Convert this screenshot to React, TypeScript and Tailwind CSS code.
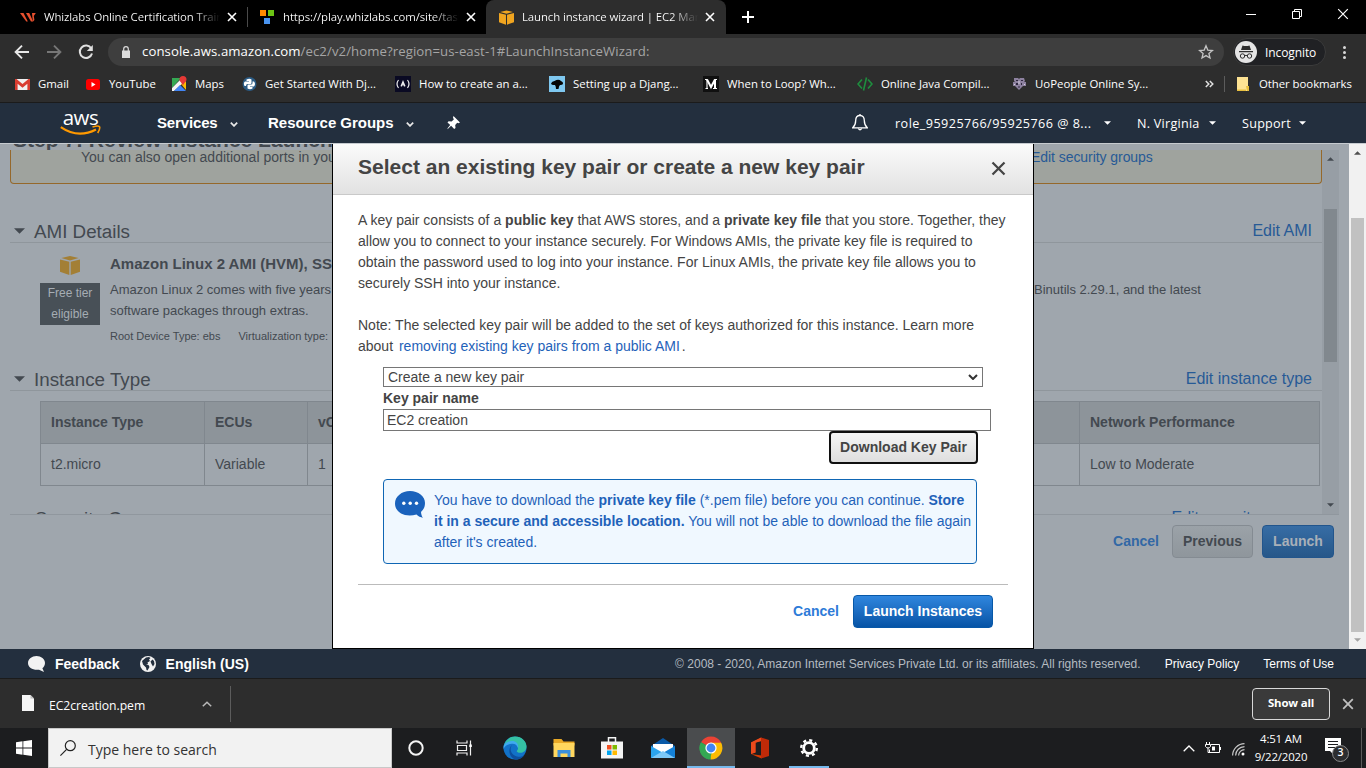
import type { ReactNode } from "react";

const SEGOE = "font-['Open_Sans','Noto_Sans',sans-serif]";

/* ---------- shared glyphs ---------- */

function CloseX({ className }: { className: string }) {
  return (
    <svg viewBox="0 0 10 10" className={className} fill="none" stroke="currentColor">
      <path d="M1 1l8 8M9 1L1 9" />
    </svg>
  );
}

function Cube({ className, fill }: { className: string; fill: string }) {
  return (
    <svg viewBox="0 0 20 19" className={className} fill={fill}>
      <path d="M10 0l8.6 2.1L10 4.4 1.4 2.1z" />
      <path d="M0 3.4l9.3 2.4V19L0 15.8z" />
      <path d="M20 3.4l-9.3 2.4V19L20 15.8z" />
    </svg>
  );
}

function Triangle({ className, up }: { className: string; up?: boolean }) {
  return (
    <svg viewBox="0 0 8 4" className={className} fill="currentColor">
      <path d={up ? "M0 4L4 0l4 4z" : "M0 0h8L4 4z"} />
    </svg>
  );
}

/* ---------- browser chrome ---------- */

function TabTitle({ children }: { children: ReactNode }) {
  return (
    <span className="block w-[176px] shrink-0 overflow-hidden whitespace-nowrap bg-linear-to-r from-white from-85% to-transparent bg-clip-text text-[11.4px] tracking-[-0.1px] text-transparent">
      {children}
    </span>
  );
}

function TabStrip() {
  return (
    <div className="flex h-[34px] items-start bg-black text-white">
      <div className="flex h-[34px] w-[247px] items-center pl-5">
        <svg viewBox="0 0 16 9" className="mr-2 h-[9px] w-4" fill="#e8502e">
          <path d="M0 0h3.500l4.300 8.500H6.300z" />
          <path d="M6 0h3.200l4 8.500H11z" />
          <path d="M12 0h3.800l-2 3 .6 4-1.400 1.500-.6-4z" />
        </svg>
        <TabTitle>Whizlabs Online Certification Training</TabTitle>
        <CloseX className="ml-[7px] size-[10px] stroke-[1.6]" />
      </div>
      <div className="mt-[7px] h-5 w-px bg-[#4a4a4a]" />
      <div className="flex h-[34px] w-[238px] items-center pl-3">
        <svg viewBox="0 0 14 14" className="mr-[9px] size-[14px]">
          <path fill="#ff8a00" d="M0 0h6v6H0z" />
          <path fill="#6cc414" d="M8 0h6v6H8z" />
          <path fill="#4a94f0" d="M4 8h6v6H4z" />
        </svg>
        <TabTitle>https://play.whizlabs.com/site/task</TabTitle>
        <CloseX className="ml-[7px] size-[10px] stroke-[1.6]" />
      </div>
      <div className="flex h-[34px] w-[240px] items-center rounded-t-lg bg-[#2d2d2d] pl-[13px]">
        <Cube className="mr-2 size-[15px]" fill="#f0a520" />
        <TabTitle>Launch instance wizard | EC2 Management</TabTitle>
        <CloseX className="ml-[7px] size-[10px] stroke-[1.6]" />
      </div>
      <svg viewBox="0 0 12 12" className="mt-[11px] ml-4 size-3" stroke="#fff" strokeWidth="2">
        <path d="M6 0v12M0 6h12" />
      </svg>
      <div className="mr-[17px] ml-auto flex h-7 items-center">
        <svg viewBox="0 0 10 10" className="size-[10px]" stroke="#fff">
          <path d="M0 5.5h10" />
        </svg>
        <svg viewBox="0 0 10 10" className="ml-9 size-[10px]" fill="none" stroke="#fff">
          <path d="M.5 2.5h7v7h-7zM2.500 2.500v-2h7v7h-2" />
        </svg>
        <CloseX className="ml-[35px] size-3" />
      </div>
    </div>
  );
}

function AddressBar() {
  return (
    <div className="flex h-[35px] items-center bg-[#2d2d2d]">
      <svg viewBox="0 0 16 16" className="ml-[14px] size-4" fill="none" stroke="#e8e8e8" strokeWidth="1.9">
        <path d="M15 8H2M8 1.600L1.600 8 8 14.400" />
      </svg>
      <svg viewBox="0 0 16 16" className="ml-4 size-4" fill="none" stroke="#777" strokeWidth="1.9">
        <path d="M1 8h13M8 1.600L14.400 8 8 14.400" />
      </svg>
      <svg viewBox="0 0 16 16" className="ml-4 size-4" fill="none" stroke="#e0e0e0" strokeWidth="2">
        <path d="M13.300 4.500A6.200 6.200 0 1 0 14 9.500" />
        <path d="M14.800 1v6h-6z" fill="#e0e0e0" stroke="none" />
      </svg>
      <div className="ml-[14px] flex h-7 w-[1116px] items-center rounded-full bg-[#3e3e3e] pr-[10px] pl-[14px]">
        <svg viewBox="0 0 8 12" className="mr-3 h-3 w-2" fill="#dcdcdc">
          <path d="M0 4.500h8V12H0z" />
          <path d="M1.700 5V3a2.300 2.300 0 0 1 4.600 0v2" fill="none" stroke="#dcdcdc" strokeWidth="1.200" />
        </svg>
        <span className="pt-px text-[13.2px] tracking-[0.07px] whitespace-nowrap text-[#a5a5a5]">
          <span className="text-white">console.aws.amazon.com</span>/ec2/v2/home?region=us-east-1#LaunchInstanceWizard:
        </span>
        <svg viewBox="0 0 16 16" className="ml-auto size-4" fill="none" stroke="#c4c4c4" strokeWidth="1.300">
          <path d="M8 1.800l1.800 4.300 4.600.4-3.500 3 1.100 4.500L8 11.600 4 14l1.100-4.500-3.500-3 4.600-.4z" />
        </svg>
      </div>
      <div className="ml-[9px] flex h-7 w-[93px] items-center rounded-full border border-[#3b3b3b] bg-[#202124] pl-px">
        <svg viewBox="0 0 22 22" className="size-[22px]">
          <circle cx="11" cy="11" r="11" fill="#e4e4e4" />
          <path fill="#2d2d2d" d="M7.500 4.500q3.500 1 7 0L16 9H6zM4 10h14v1.200H4z" />
          <g fill="none" stroke="#2d2d2d">
            <circle cx="7.500" cy="15" r="2.200" />
            <circle cx="14.500" cy="15" r="2.200" />
            <path d="M9.700 14.700q1.300-.8 2.600 0" />
          </g>
        </svg>
        <span className="ml-2 pt-0.5 text-[12px] tracking-[-0.1px] text-white">Incognito</span>
      </div>
      <svg viewBox="0 0 3 13" className="mt-0.5 ml-[17px] h-[13px] w-[3px]" fill="#d8d8d8">
        <circle cx="1.500" cy="1.500" r="1.500" />
        <circle cx="1.500" cy="6.500" r="1.500" />
        <circle cx="1.500" cy="11.500" r="1.500" />
      </svg>
    </div>
  );
}

function Bookmark({ icon, label, className }: { icon: ReactNode; label: string; className: string }) {
  return (
    <div className={`flex shrink-0 items-center ${className}`}>
      <svg viewBox="0 0 16 16" className="size-4 shrink-0">
        {icon}
      </svg>
      <span className="whitespace-nowrap">{label}</span>
    </div>
  );
}

function BookmarksBar() {
  return (
    <div className="flex h-[34px] items-center border-b border-[#1b1b1b] bg-[#2d2d2d] pb-[3px] pl-[15px] text-[11.4px] text-white">
      <Bookmark
        className="w-[71px] gap-[7px]"
        label="Gmail"
        icon={
          <>
            <path fill="#f1f1f1" d="M1 3h13v11H1z" />
            <path fill="#d93d31" d="M0 3h1.500l6 5 6-5H15v11h-2.600V7.800l-4.900 4-4.900-4V14H0z" />
          </>
        }
      />
      <Bookmark
        className="w-[86px] gap-[7px]"
        label="YouTube"
        icon={
          <>
            <rect y="3" width="14" height="11" rx="2.500" fill="#f00" />
            <path fill="#fff" d="M5.500 6l4 2.500-4 2.500z" />
          </>
        }
      />
      <Bookmark
        className="w-[70px] gap-[7px]"
        label="Maps"
        icon={
          <>
            <path fill="#34a853" d="M0 2h9L0 12z" />
            <path fill="#f4f4f4" d="M0 12L9 3l3 3-10 9H0z" />
            <path fill="#4285f4" d="M2 15l6-6 6 6z" />
            <path fill="#fbbc04" d="M9 8l5-3v9z" />
            <path fill="#e53935" d="M11 0a3.500 3.500 0 0 1 3.500 3.500C14.500 6 11.500 7 11 10c-.5-3-3.500-4-3.500-6.500A3.500 3.500 0 0 1 11 0z" />
          </>
        }
      />
      <Bookmark
        className="w-[153px] gap-[7px]"
        label="Get Started With Dj..."
        icon={
          <>
            <circle cx="7.500" cy="8" r="7" fill="#2b5b84" />
            <path fill="#fff" d="M4.500 3.500q3-1.500 5 0V7q0 1-1 1H5.500Q4 8 4 10H2.500Q1 7 3 5.500h4V5H4.500zM10.500 5.500H12q2 2.500 0 5H8v.5h2.500v1.500q-2.500 1.500-5 0V9.500q0-1 1-1H9q1.500 0 1.500-1.500z" />
          </>
        }
      />
      <Bookmark
        className="w-[154px] gap-2"
        label="How to create an a..."
        icon={
          <>
            <path fill="#0a0a23" d="M0 0h16v16H0z" />
            <path fill="none" stroke="#eee" strokeWidth="1.200" d="M3.500 4Q.5 8 3.500 12M12.500 4q3 4 0 8" />
            <path fill="#eee" d="M8 4l2.500 6q-1.300 1.200-1.800 0L8 8.500l-.7 1.500q-.8 1.200-1.800 0z" />
          </>
        }
      />
      <Bookmark
        className="w-[154px] gap-2"
        label="Setting up a Djang..."
        icon={
          <>
            <path fill="#7fc8f0" d="M0 0h16v16H0z" />
            <path fill="#050505" d="M2 7.500q1-2.500 3.500-2.500 4-2.500 6.500 0 2.500 1 2 3-1 1.200-3 1-1 .5-1.500 4h-2.500q0-2.500-1-4Q2.500 9.500 2 7.500z" />
          </>
        }
      />
      <Bookmark
        className="w-[154px] gap-2"
        label="When to Loop? Wh..."
        icon={
          <>
            <path fill="#101010" d="M0 0h16v16H0z" />
            <path fill="none" stroke="#fff" strokeWidth="1.100" d="M2 3.500h2.500M11.500 3.500H14M2.500 12.500h2.500M10 12.500h4M4 3.500v9" />
            <path fill="none" stroke="#fff" strokeWidth="2" d="M4 3.500l4 7.500 4-7.500v9" />
          </>
        }
      />
      <Bookmark
        className="w-[154px] gap-2"
        label="Online Java Compil..."
        icon={<path fill="none" stroke="#1e8e3e" strokeWidth="1.600" d="M5 3.500L1 8l4 4.500M11 3.500L15 8l-4 4.500M9.500 1.500l-3 13" />}
      />
      <Bookmark
        className="w-[194px] gap-2"
        label="UoPeople Online Sy..."
        icon={
          <>
            <path fill="#8d819f" d="M3 2h4l1 1 1-1h4l1 3-1 1h2v4h-3l-2 2-2 2-2-2-2-2H2V6h2L3 5z" />
            <path fill="#2f2840" d="M5 4h2v1H5zM10 4h2v1h-2zM5 7h2v2H5zM10 7h1v2h-1zM7.500 10h1v2h-1z" />
            <path fill="#d8d2e0" d="M7.500 5h1v3h-1zM3 8h1v1H3zM13 8h1v1h-1z" />
          </>
        }
      />
      <svg viewBox="0 0 9 8" className="h-2 w-[9px]" fill="none" stroke="#e0e0e0" strokeWidth="1.500">
        <path d="M.8 1l3 3-3 3M4.800 1l3 3-3 3" />
      </svg>
      <div className="ml-[10px] h-4 w-px bg-[#5c5c5c]" />
      <Bookmark
        className="ml-[11px] gap-[7px] tracking-[-0.05px]"
        label="Other bookmarks"
        icon={
          <>
            <path fill="#fde293" d="M1 1h11v14H1z" />
            <path fill="#e8bf3f" d="M1 13.500h9V15H1zM10 10h3v5h-2z" />
          </>
        }
      />
    </div>
  );
}

/* ---------- AWS header / footer ---------- */

function Chevron({ className }: { className: string }) {
  return (
    <svg viewBox="0 0 8 5" className={`h-[5px] w-2 ${className}`} fill="none" stroke="#e8e8e8" strokeWidth="1.700">
      <path d="M.8.7L4 3.900 7.200.7" />
    </svg>
  );
}

function AwsNav() {
  return (
    <div className="flex h-10 items-center bg-[#232f3e] text-white">
      <div className="ml-[60px] flex h-10 w-[41px] flex-col items-center pt-[5px]">
        <span className="font-['Open_Sans',sans-serif] text-[20.5px] leading-[18px] font-medium tracking-[-0.5px]">aws</span>
        <svg viewBox="0 0 41 11" className="-mt-px h-[11px] w-[41px]" fill="none" stroke="#f90">
          <path d="M.8 2.200Q18 14 36 4.500" strokeWidth="2.200" />
          <path d="M32.500 2q6-1.600 7-.3 1 1.600-1.800 6.300" strokeWidth="1.600" />
        </svg>
      </div>
      <div className="ml-14 flex items-center font-['Liberation_Sans',sans-serif] text-[15px] font-bold">
        <span className="w-[73px] tracking-[-0.15px]">Services</span>
        <Chevron className="mt-[3px]" />
        <span className="ml-[30px] w-[138px] tracking-[-0.02px] whitespace-nowrap">Resource Groups</span>
        <Chevron className="mt-[3px]" />
      </div>
      <svg viewBox="0 0 14 14" className="ml-[33px] size-[14px]" fill="#fff">
        <path d="M6.500 0L13 6.500l-1.500.8-1.300-.6-2 2.200.3 3-1.300 1.100-3.100-3.200-3.600 3.400.1-1 2.600-3.300L.5 6.500l1.100-1.300 3 .3 2.200-2L6 1.500z" />
      </svg>
      <div className={`ml-auto flex items-center text-[12.6px] tracking-[0.25px] ${SEGOE}`}>
        <svg viewBox="0 0 16 17" className="mr-[27px] h-[17px] w-4" fill="none" stroke="#fff" strokeWidth="1.300">
          <path d="M8 1.500c-3 0-4.300 2-4.300 5 0 4-1 5.500-3 7.300h14.600c-2-1.800-3-3.300-3-7.300 0-3-1.300-5-4.300-5z" />
          <path d="M8 0v1.500M6.300 14.500Q8 17 9.700 14.500" />
        </svg>
        <span className="w-[209px] pt-0.5 tracking-[0.46px] whitespace-nowrap">role_95925766/95925766 @ 8...</span>
        <Triangle className="h-1 w-[7px]" />
        <span className="ml-[26px] w-[72px] pt-0.5 whitespace-nowrap">N. Virginia</span>
        <Triangle className="h-1 w-[7px]" />
        <span className="ml-[26px] w-[57px] pt-0.5">Support</span>
        <Triangle className="mr-[60px] h-1 w-[7px]" />
      </div>
    </div>
  );
}

function AwsFooter() {
  return (
    <div className="flex h-[30px] items-center border-b border-[#1b1b1b] bg-[#232f3e] pl-7 text-white">
      <svg viewBox="0 0 17 16" className="h-4 w-[17px]" fill="#f2f2f2">
        <path d="M8.500 0C13 0 17 3 17 7c0 2.300-1.100 4-2.600 5.200L16 16l-5-2.300C5 14.500 0 11.500 0 7c0-4 4-7 8.500-7z" />
      </svg>
      <span className="ml-[10px] pt-0.5 text-[14px] font-bold">Feedback</span>
      <svg viewBox="0 0 16 16" className="ml-5 size-4">
        <circle cx="8" cy="8" r="8" fill="#f2f2f2" />
        <path fill="#232f3e" d="M6 1.500l3-.5 1.500 1L9 3.500l1 1.500-2.500 1.500L8 8l-2 .5L8.500 9l1 2-2 3.500-1-.5-.5-2.500-3-3L2 5zM10.500 5.500l2-2 1.500 1.500.5 3-1.500 2.500-1.500-2.500z" />
      </svg>
      <span className="ml-[10px] pt-0.5 text-[14px] font-bold">English (US)</span>
      <div className="mr-8 ml-auto flex items-center text-[12px]">
        <span className="text-[#b5bbc1]">© 2008 - 2020, Amazon Internet Services Private Ltd. or its affiliates. All rights reserved.</span>
        <span className="ml-6">Privacy Policy</span>
        <span className="ml-6">Terms of Use</span>
      </div>
    </div>
  );
}

/* ---------- wizard page behind the dialog ---------- */

function SectionHead({ title, link, className }: { title: string; link: string; className: string }) {
  return (
    <div className={`flex items-end border-b border-[#8f969c] ${className}`}>
      <Triangle className="mb-[8px] ml-1 h-[6px] w-[11px]" />
      <span className="ml-[9px] text-[18.8px] leading-[21px]">{title}</span>
      <span className="mr-[10px] ml-auto text-[16px] leading-[22px] text-[#275a96]">{link}</span>
    </div>
  );
}

function WizardPage() {
  return (
    <div className="flex h-[505px] w-[1349px] flex-col overflow-hidden bg-[#9fa6ad] text-[#434950]">
      <div className="flex h-[6px] items-end overflow-hidden pl-[13px] text-[21px] leading-[22px] font-bold whitespace-nowrap">
        <span className="mb-[-1px] block">Step 7: Review Instance Launch</span>
      </div>
      <div className="ml-[10px] flex h-[365px] w-[1329px] border-b border-[#90979e]">
        <div className="h-[364px] w-[1312px] overflow-hidden">
          <div className="flex h-[34px] rounded-b-[4px] border border-t-0 border-[#95682b] bg-[#9fa39e] pl-[70px] text-[14px] leading-[15px]">
            <span className="w-[950px] whitespace-nowrap">You can also open additional ports in your</span>
            <span className="tracking-[-0.06px] text-[#275a96]">Edit security groups</span>
          </div>
          <SectionHead title="AMI Details" link="Edit AMI" className="mt-[27px] h-8" />
          <div className="flex h-[105px] pl-[30px]">
            <div className="flex w-[60px] flex-col items-center pt-[13px]">
              <Cube className="h-[19px] w-5" fill="#a37f35" />
              <div className="mt-2 h-[42px] w-[60px] bg-[#485057] text-center text-[12px] leading-[21px] text-[#a6adb4]">
                Free tier
                <br />
                eligible
              </div>
            </div>
            <div className="ml-[10px] whitespace-nowrap">
              <div className="pt-[9px] text-[15px] leading-[23px] font-bold">Amazon Linux 2 AMI (HVM), SSD</div>
              <div className="mt-1 flex text-[13px] leading-[21px]">
                <span className="w-[924px]">Amazon Linux 2 comes with five years</span>
                <span>Binutils 2.29.1, and the latest</span>
              </div>
              <div className="text-[13px] leading-[21px]">software packages through extras.</div>
              <div className="mt-[5px] flex gap-[18px] text-[11px] leading-[21px]">
                <span>Root Device Type: ebs</span>
                <span>Virtualization type:</span>
              </div>
            </div>
          </div>
          <SectionHead title="Instance Type" link="Edit instance type" className="mt-[11px] h-8" />
          <table className="mt-[10px] ml-[30px] w-[1280px] table-fixed border-collapse text-left text-[14px]">
            <thead>
              <tr className="h-[42px] bg-[#8d949a]">
                <th className="w-[164px] border border-[#80878e] pl-[10px]">Instance Type</th>
                <th className="w-[103px] border border-[#80878e] pl-[10px]">ECUs</th>
                <th className="w-[772px] border border-[#80878e] pl-[10px]">vCPUs</th>
                <th className="border border-[#80878e] pl-[10px]">Network Performance</th>
              </tr>
            </thead>
            <tbody>
              <tr className="h-[42px]">
                <td className="border border-[#80878e] pl-[10px]">t2.micro</td>
                <td className="border border-[#80878e] pl-[10px]">Variable</td>
                <td className="border border-[#80878e] pl-[10px]">1</td>
                <td className="border border-[#80878e] pl-[10px]">Low to Moderate</td>
              </tr>
            </tbody>
          </table>
          <div className="mt-[22px] flex pl-[25px]">
            <span className="text-[18.8px] leading-[22px]">Security Groups</span>
            <span className="mr-[10px] ml-auto text-[16px] leading-[20px] text-[#275a96]">Edit security groups</span>
          </div>
        </div>
        <div className="flex w-[17px] flex-col items-center bg-[#979ea5]">
          <Triangle up className="mt-[7px] h-1 w-[7px]" />
          <div className="mt-12 h-[153px] w-[13px] bg-[#81888e]" />
          <Triangle className="mt-auto mb-[7px] h-1 w-[7px]" />
        </div>
      </div>
      <div className="mt-[10px] mr-[15px] flex items-center justify-end text-[14px] font-bold">
        <span className="mr-[13px] text-[#3268a5]">Cancel</span>
        <span className="flex h-[33px] w-[81px] items-center justify-center rounded-[4px] border border-[#848b92] bg-linear-to-b from-[#9ba2a8] to-[#8f969c]">
          Previous
        </span>
        <span className="ml-[9px] flex h-[33px] w-[72px] items-center justify-center rounded-[4px] border border-[#22558c] bg-linear-to-b from-[#376da5] to-[#265789] text-[#a9b0b8]">
          Launch
        </span>
      </div>
    </div>
  );
}

/* ---------- key pair dialog ---------- */

function KeyPairDialog() {
  return (
    <div className="absolute top-0 left-[332px] flex h-[505px] w-[702px] flex-col border border-t-0 border-black bg-white text-[14px] leading-[21px] whitespace-nowrap text-[#444]">
      <div className="flex h-[51px] shrink-0 items-start justify-between border-b border-[#c9c9c9] bg-linear-to-b from-[#fbfbfb] to-[#e2e2e2] pt-[10px] pr-7 pl-[25px]">
        <h2 className="text-[21px] leading-[26px] font-bold">
          Select an existing key pair or create a new key pair
        </h2>
        <CloseX className="mt-[7px] -mr-px size-[15px] stroke-[1.500]" />
      </div>
      <div className="px-[25px] pt-[15px]">
        <p>
          A key pair consists of a <b>public key</b> that AWS stores, and a <b>private key file</b> that you store. Together, they
          <br />
          allow you to connect to your instance securely. For Windows AMIs, the private key file is required to
          <br />
          obtain the password used to log into your instance. For Linux AMIs, the private key file allows you to
          <br />
          securely SSH into your instance.
        </p>
        <p className="mt-[21px]">
          Note: The selected key pair will be added to the set of keys authorized for this instance. Learn more
          <br />
          about <span className="ml-0.5 text-[#1f62b9]">removing existing key pairs from a public AMI</span>
          <span className="ml-0.5">.</span>
        </p>
      </div>
      <div className="mt-[10px] ml-[50px] flex w-[608px] flex-col">
        <div className="flex h-5 w-[600px] items-center justify-between border border-[#767676] pr-1 pl-1">
          <span>Create a new key pair</span>
          <svg viewBox="0 0 10 6" className="h-[6px] w-[10px]" fill="none" stroke="#333" strokeWidth="2">
            <path d="M1 1l4 4 4-4" />
          </svg>
        </div>
        <b className="h-[22px] leading-[22px]">Key pair name</b>
        <div className="flex h-[22px] items-center border border-[#767676] pl-[3px]">EC2 creation</div>
        <div className="mr-[13px] flex h-[33px] w-[149px] items-center justify-center self-end rounded-[4px] border-2 border-[#101010] bg-linear-to-b from-[#f6f6f6] to-[#dedede] font-bold">
          Download Key Pair
        </div>
      </div>
      <div className="mt-[15px] ml-[50px] flex h-[85px] w-[594px] rounded-[4px] border border-[#0f66b4] bg-[#f0f8ff] pt-[10px] pl-[11px] text-[#1f62b9]">
        <svg viewBox="0 0 30 27" className="mt-px mr-[9px] h-[27px] w-[30px] shrink-0">
          <path fill="#1a62bc" d="M15 0c8.300 0 15 5.300 15 12 0 4-1.500 6.800-4 8.900.2 2.400.8 4.300 2 5.900-2.600-.4-4.600-1.400-6.500-3.200C9 26.800 0 21 0 12.500 0 5.500 6.700 0 15 0z" />
          <g fill="#fff">
            <circle cx="8.800" cy="12.300" r="1.700" />
            <circle cx="15.200" cy="12.300" r="1.700" />
            <circle cx="21.500" cy="12.300" r="1.700" />
          </g>
        </svg>
        <p>
          You have to download the <b>private key file</b> (*.pem file) before you can continue. <b>Store</b>
          <br />
          <b>it in a secure and accessible location.</b> You will not be able to download the file again
          <br />
          after it's created.
        </p>
      </div>
      <div className="mx-[25px] mt-5 flex items-center justify-end border-t border-[#bbb] pt-[10px] pr-[15px] font-bold">
        <span className="mr-[14px] text-[#2d7bd8]">Cancel</span>
        <span className="flex h-[33px] w-[140px] items-center justify-center rounded-[4px] border border-[#0758a8] bg-linear-to-b from-[#2f86de] to-[#0654a6] text-white">
          Launch Instances
        </span>
      </div>
    </div>
  );
}

/* ---------- download shelf and taskbar ---------- */

function DownloadShelf() {
  return (
    <div className={`flex h-[49px] items-center bg-[#2d2d2d] text-white ${SEGOE}`}>
      <svg viewBox="0 0 12 16" className="mb-px ml-[22px] h-4 w-3">
        <path fill="#f6f6f6" d="M0 0h8.500L12 3.500V16H0z" />
        <path fill="#bdbdbd" d="M8.500 0L12 3.500H8.500z" />
      </svg>
      <span className="mt-[5px] ml-[15px] w-[153px] text-[12.200px] tracking-[-0.05px]">EC2creation.pem</span>
      <svg viewBox="0 0 10 6" className="h-[6px] w-[10px]" fill="none" stroke="#b8b8b8" strokeWidth="1.500">
        <path d="M.8 5.300L5 1.200l4.200 4.100" />
      </svg>
      <div className="ml-[18px] h-9 w-px bg-[#5c5c5c]" />
      <div className="mr-[12px] ml-auto flex h-8 w-[78px] items-center justify-center rounded-[4px] border border-[#d8d8d8] bg-[#3a3a3a] pb-px text-[11.400px] font-bold tracking-[-0.15px]">
        Show all
      </div>
      <CloseX className="mr-[12px] size-3 stroke-[1.500] text-[#c0c0c0]" />
    </div>
  );
}

function AppSlot({ children, className }: { children: ReactNode; className: string }) {
  return (
    <div className={`flex h-10 shrink-0 items-center justify-center ${className}`}>
      <svg viewBox="0 0 24 24" className="size-6">
        {children}
      </svg>
    </div>
  );
}

function Taskbar() {
  return (
    <div className={`flex h-10 items-center bg-[#1c1d1f] text-white ${SEGOE}`}>
      <svg viewBox="0 0 16 16" className="ml-4 size-4" fill="#fff">
        <path d="M0 2.200l6.500-.9v6.300H0zM7.300 1.200L16 0v7.600H7.300zM0 8.400h6.500v6.300L0 13.800zM7.300 8.400H16V16l-8.700-1.200z" />
      </svg>
      <div className="ml-4 flex h-10 w-[344px] items-center border border-[#c8c8c8] bg-[#f2f2f2] text-[#333]">
        <svg viewBox="0 0 16 16" className="ml-[11px] size-4" fill="none" stroke="#222" strokeWidth="1.200">
          <circle cx="10.300" cy="5.700" r="5" />
          <path d="M6.600 9.400L.4 15.600" />
        </svg>
        <span className="ml-3 pt-0.5 text-[14px]">Type here to search</span>
      </div>
      <AppSlot className="w-12">
        <circle cx="12" cy="12" r="6.700" fill="none" stroke="#f4f4f4" strokeWidth="2" />
      </AppSlot>
      <AppSlot className="w-[47px]">
        <g fill="none" stroke="#f0f0f0" strokeWidth="1.200">
          <path d="M5.500 9.500h9v5h-9zM5 4.500v2.500h10V4.500M5 19.500V17h10v2.500M18.500 4.500v15" />
        </g>
        <path fill="#fff" d="M17.300 8.500h2.500V11h-2.500z" />
      </AppSlot>
      <AppSlot className="w-[55px]">
        <circle cx="12" cy="12" r="11.500" fill="#1272c8" />
        <path fill="#35c1a4" d="M1 9C3 3 7.500.5 12 .5c7 0 11.500 5 11.500 10 0 4-3 6.300-6.300 6.300-2.500 0-4-1-3.300-2 1-1.300 1.200-2 1-3.500C14.500 8.500 12 7 9 7 5.500 7 2 8 1 9z" />
        <path fill="#3fa9ef" d="M1 9c2-3 5-4 8-4 5 0 7 4 6 7-1-3-3-4.500-6-4.300C5 8 1.500 10 .6 13 .4 11.500.5 10 1 9z" />
        <path fill="#0d4f9e" d="M9 9c-3 4-1 10 5 11.500 3 .7 5.500 0 7.500-1.500C19 22.500 15.500 24 12 23.500 6 21 4.500 13 9 9z" />
      </AppSlot>
      <AppSlot className="w-[44px]">
        <path fill="#e9a926" d="M1.500 3h8l2 2.500h11v4h-21z" />
        <path fill="#ffd75e" d="M1.500 7h21v14h-21z" />
        <path fill="#3b8fdb" d="M5.500 14h13v7h-3v-3.500h-7V21h-3z" />
      </AppSlot>
      <AppSlot className="w-[52px]">
        <path fill="none" stroke="#f4f4f4" strokeWidth="1.500" d="M8.500 6V1.800h7V6" />
        <path fill="#f4f4f4" d="M1 5.500h22v17H1z" />
        <path fill="#f25022" d="M7 9h4.500v4.500H7z" />
        <path fill="#7fba00" d="M12.500 9H17v4.500h-4.500z" />
        <path fill="#00a4ef" d="M7 14.500h4.500V19H7z" />
        <path fill="#ffb900" d="M12.500 14.500H17V19h-4.500z" />
      </AppSlot>
      <AppSlot className="w-[49px]">
        <path fill="#0a5aa8" d="M0 10L12 2l12 8v12H0z" />
        <path fill="#fff" d="M2 8h20v5l-10 5-10-5z" />
        <path fill="#2ba4ee" d="M0 22V10l14 8z" />
        <path fill="#1481d8" d="M24 10v12H3z" />
        <path fill="#7cc8f8" d="M24 22H0l12-7z" />
      </AppSlot>
      <div className="flex h-10 w-12 shrink-0 flex-col items-center bg-[#4a4c4e]">
        <svg viewBox="0 0 24 24" className="mt-2 size-6">
          <path fill="#ea4335" d="M12 12L2.040 6.250A11.500 11.500 0 0 1 21.960 6.250L22 7H12z" />
          <path fill="#34a853" d="M12 12l-.1 11.500A11.500 11.500 0 0 1 2.040 6.250z" />
          <path fill="#fbbc04" d="M12 12V6.800h10.200A11.500 11.500 0 0 1 11.700 23.500z" />
          <path fill="#34a853" d="M2.040 6.250l5.400 8.600L13 17l-3.400 6.250A11.500 11.500 0 0 1 2.040 6.250z" />
          <circle cx="12" cy="12" r="5.600" fill="#fff" />
          <circle cx="12" cy="12" r="4.400" fill="#4285f4" />
        </svg>
        <div className="mt-1.5 h-0.5 w-12 bg-[#76b9ed]" />
      </div>
      <AppSlot className="w-[49px]">
        <path fill="#d83b01" d="M3 6.500L13.500 1.500v21L3 18l10.500 1.400V5L7.500 6.500v10L3 18z" />
        <path fill="#c02a08" d="M13 1.500l8 2.500v16l-8 2.500z" />
        <path fill="#ea4a1c" d="M3 6.500l10-5V5L7.500 6.700v9.800L3 18z" />
      </AppSlot>
      <div className="flex h-10 w-[49px] shrink-0 flex-col items-center">
        <svg viewBox="0 0 24 24" className="mt-2 size-6" fill="none" stroke="#fff">
          <circle cx="12" cy="12" r="5.300" strokeWidth="2.800" />
          <circle cx="12" cy="12" r="7.800" strokeWidth="2.400" strokeDasharray="3.060 3.060" />
        </svg>
        <div className="mt-1.5 h-0.5 w-10 bg-[#76b9ed]" />
      </div>
      <div className="mr-1 ml-auto flex h-10 items-center">
        <svg viewBox="0 0 12 7" className="h-[7px] w-3" fill="none" stroke="#fff" strokeWidth="1.300">
          <path d="M.7 6.300L6 1l5.300 5.300" />
        </svg>
        <svg viewBox="0 0 16 12" className="ml-[10px] h-3 w-4" fill="none" stroke="#fff">
          <path d="M6 2.500h8.500v8h-10v-3M15.500 5v3M1.500 0v2.500M4.500 0v2.500M.5 2.500h5v2q-1 1.500-2.500 1.500T.5 4.500zM3 6v4.500h2" />
          <path fill="#fff" stroke="none" d="M7 4.500h3v4H7z" />
        </svg>
        <svg viewBox="0 0 13 13" className="mt-[3px] ml-[11px] size-[13px]" fill="none" stroke="#c8c8c8" strokeWidth="1.200">
          <path d="M.6 12.500A12 12 0 0 1 12.500.6M3.600 12.500a9 9 0 0 1 8.900-8.900M6.600 12.500a6 6 0 0 1 5.900-5.900" />
          <circle cx="11" cy="11" r="1.500" fill="#fff" stroke="none" />
        </svg>
        <div className="ml-[6px] w-[60px] pb-px text-center text-[11.400px] leading-[18px] tracking-[-0.15px] whitespace-nowrap">
          4:51 AM
          <br />
          9/22/2020
        </div>
        <div className="relative mt-[3px] ml-[14px] h-[24px] w-[28px]">
          <svg viewBox="0 0 17 17" className="size-[17px]">
            <path fill="#fff" d="M0 0h16v13H8v3l-3-3H0z" />
            <path stroke="#1c1d1f" d="M3 3.500h10M3 6.500h10M3 9.500h7" />
          </svg>
          <span className="absolute top-[7px] left-[7px] flex size-[17px] items-center justify-center rounded-full border border-[#8a8a8a] bg-[#2c2d2f] text-[10.500px] font-semibold">
            3
          </span>
        </div>
        <div className="ml-[8px] h-10 w-px bg-[#5a5a5a]" />
      </div>
    </div>
  );
}

export default function App() {
  return (
    <div className="flex h-[768px] w-[1366px] flex-col overflow-hidden font-['Liberation_Sans',Arial,sans-serif]">
      <div className={SEGOE}>
        <TabStrip />
        <AddressBar />
        <BookmarksBar />
      </div>
      <AwsNav />
      <div className="relative flex h-[506px] shrink-0 border-t border-[#c6cbd0]">
        <WizardPage />
        <div className="flex w-[17px] flex-col items-center bg-[#f1f1f1]">
          <Triangle up className="mt-[7px] h-1 w-[7px] text-[#505050]" />
          <div className="mt-[63px] h-[414px] w-[13px] bg-[#c1c1c1]" />
          <Triangle className="mt-auto mb-[7px] h-1 w-[7px] text-[#a3a3a3]" />
        </div>
        <KeyPairDialog />
      </div>
      <AwsFooter />
      <DownloadShelf />
      <Taskbar />
    </div>
  );
}
